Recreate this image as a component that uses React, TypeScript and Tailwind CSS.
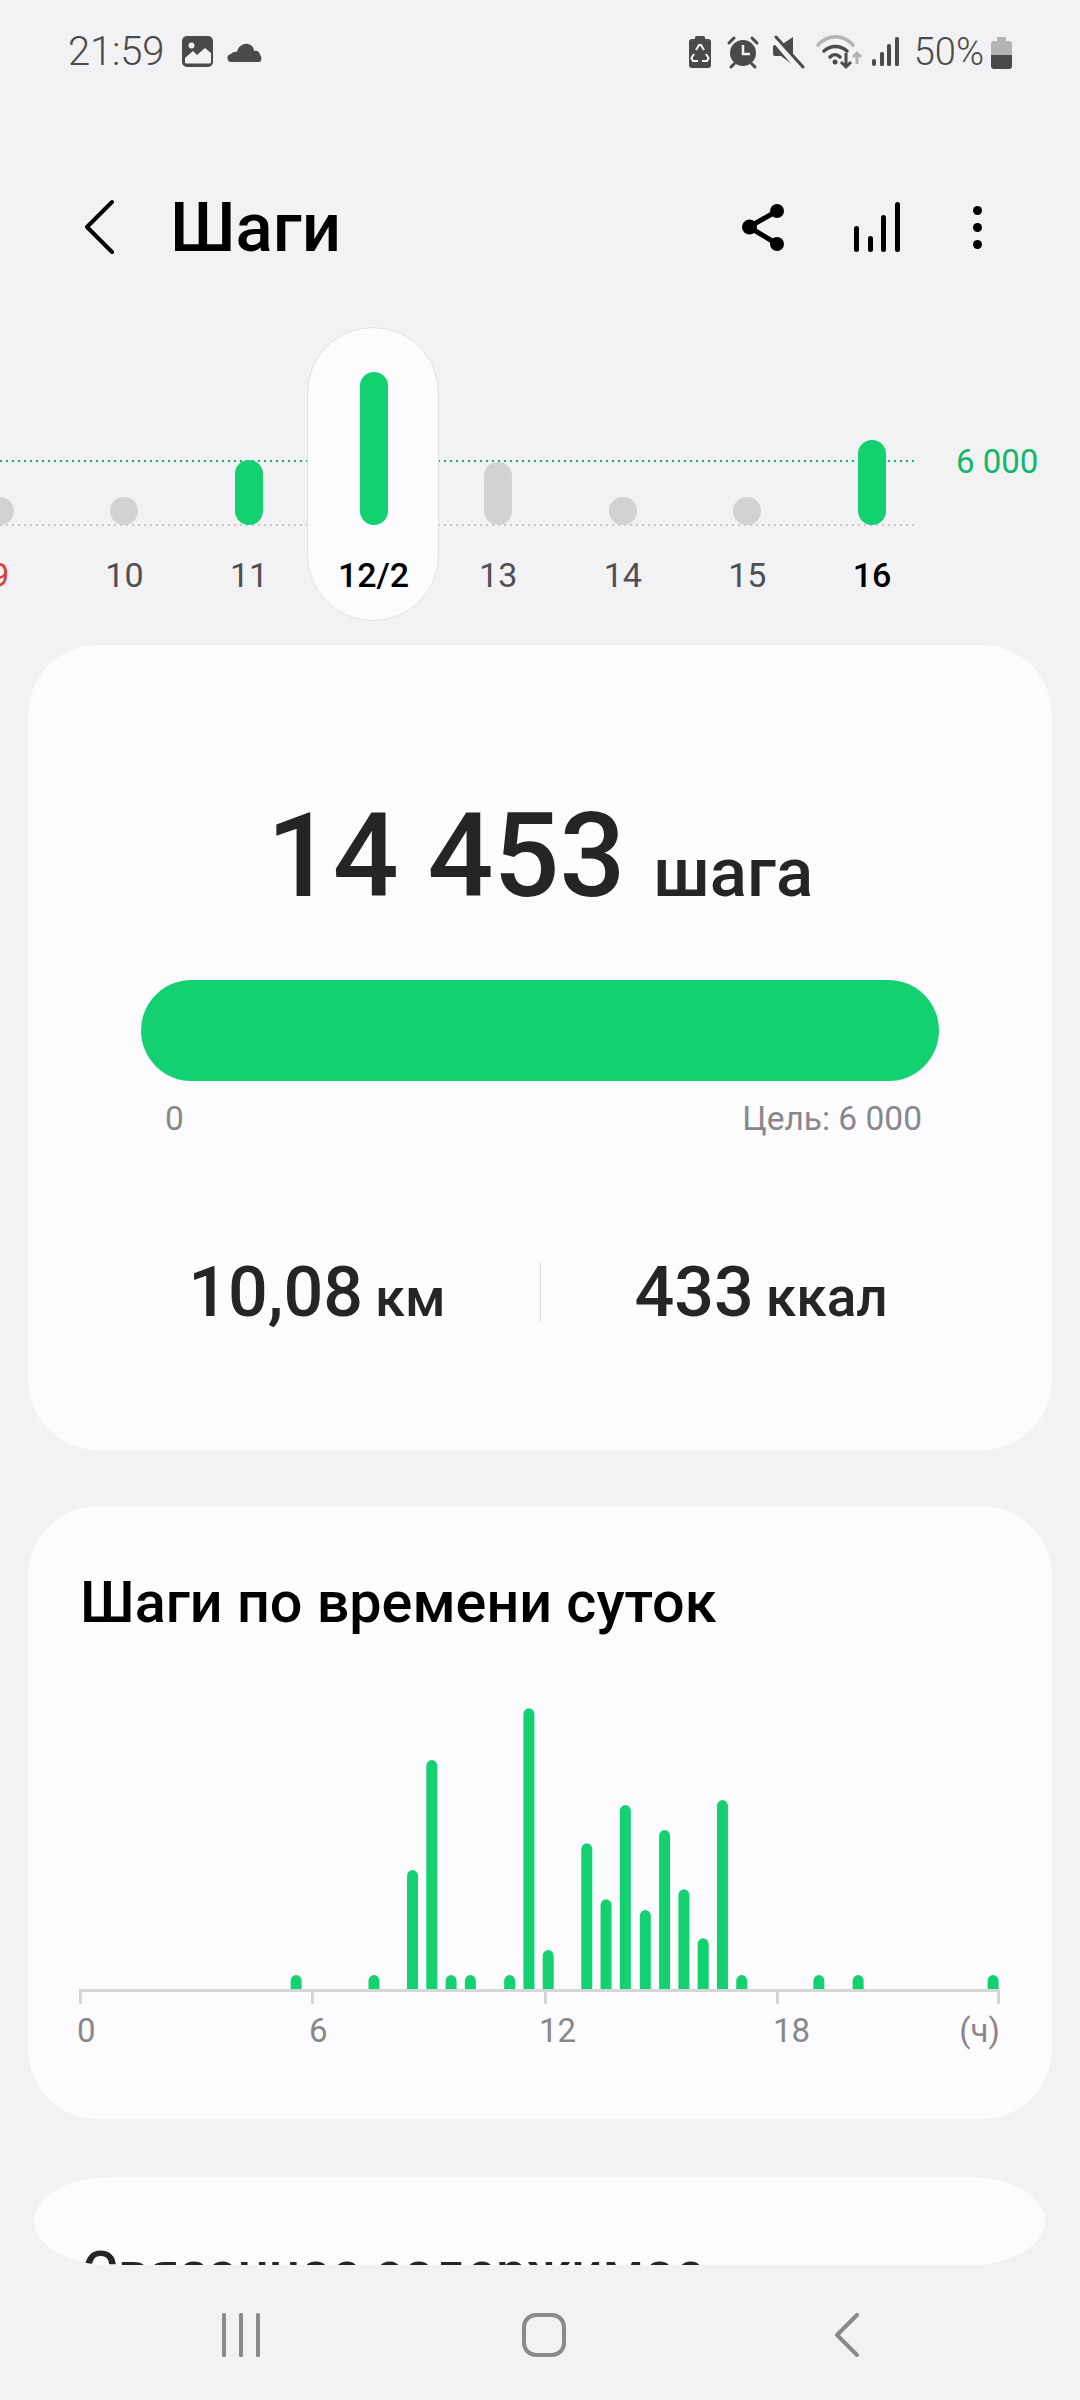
import React from "react";

const days = [
  { label: "9", h: 28, color: "bg-[#d2d2d2]", text: "text-[#d9413a]" },
  { label: "10", h: 28, color: "bg-[#d2d2d2]", text: "text-[#4f5054]" },
  { label: "11", h: 65, color: "bg-[#13d071]", text: "text-[#4f5054]" },
  { label: "12/2", h: 153, color: "bg-[#13d071]", text: "text-black font-medium", selected: true },
  { label: "13", h: 63, color: "bg-[#d2d2d2]", text: "text-[#4f5054]" },
  { label: "14", h: 28, color: "bg-[#d2d2d2]", text: "text-[#4f5054]" },
  { label: "15", h: 28, color: "bg-[#d2d2d2]", text: "text-[#4f5054]" },
  { label: "16", h: 85, color: "bg-[#13d071]", text: "text-black font-medium" },
];

const xs = [430, 543, 599, 627, 655, 683, 740, 768, 796, 852, 880, 908, 937, 965, 993, 1021, 1049, 1077, 1189, 1246, 1442];
const tops = [975, 975, 660, 330, 975, 975, 975, 175, 900, 580, 748, 465, 780, 540, 718, 865, 450, 975, 975, 975, 975];
const ticks = [51, 283, 516, 748, 969];

function StatusIcons() {
  return (
    <svg width="215" height="36" viewBox="0 0 215 36" className="mt-[2px] shrink-0" fill="#4a4a4a">
      {/* battery saver */}
      <path d="M11 4V2.500A1.500 1.500 0 0 1 12.500 1h7A1.500 1.500 0 0 1 21 2.500V4h3a3 3 0 0 1 3 3v23a3 3 0 0 1-3 3H8a3 3 0 0 1-3-3V7a3 3 0 0 1 3-3z" />
      <path d="M12 15l3-5h2l3 5M22 19l2.500 4-1.500 3h-5M14 26H9l-1.500-3 2.500-4" fill="none" stroke="#f2f2f4" strokeWidth="2" />
      {/* alarm */}
      <circle cx="59" cy="18" r="13" />
      <path d="M59 10v9h7" fill="none" stroke="#f2f2f4" strokeWidth="2.500" />
      <path d="M45 8l5-5M73 8l-5-5M50 29l-3 3M68 29l3 3" fill="none" stroke="#4a4a4a" strokeWidth="3" strokeLinecap="round" />
      {/* mute */}
      <path d="M91 10h6l12-8v28l-12-9h-6a2 2 0 0 1-2-2v-7a2 2 0 0 1 2-2z" />
      <path d="M90 3l26 31" stroke="#f2f2f4" strokeWidth="7" fill="none" />
      <path d="M92 2l27 30" stroke="#4a4a4a" strokeWidth="3" fill="none" strokeLinecap="round" />
      {/* wifi */}
      <path d="M134 10c10-11 25-11 35 0" fill="none" stroke="#b4b4b4" strokeWidth="3.500" strokeLinecap="round" />
      <path d="M140 16c7-6 16-6 23 0M146 22c3-3 7-3 10 0" fill="none" stroke="#4a4a4a" strokeWidth="3.500" strokeLinecap="round" />
      <circle cx="151" cy="27" r="2.500" />
      <path d="M162 18v14m-5-5l5 5 5-5" fill="none" stroke="#4a4a4a" strokeWidth="3" />
      <path d="M173 29V18m-4 4l4-4 4 4" fill="none" stroke="#b4b4b4" strokeWidth="3" />
      {/* signal */}
      <rect x="188" y="24" width="4" height="7" rx="2" />
      <rect x="196" y="17" width="4" height="14" rx="1.500" />
      <rect x="203" y="9" width="4" height="22" rx="1.500" />
      <rect x="211" y="2" width="4" height="29" rx="1.500" />
    </svg>
  );
}

export default function App() {
  return (
    <div className="relative h-[2400px] w-[1080px] overflow-hidden bg-[#f2f2f4] font-['Roboto',sans-serif]">
      {/* status bar */}
      <div className="flex h-[104px] items-center pl-[68px] pr-[68px] text-[38px] font-light text-[#4a4a4a]">
        <span className="text-[40px] tracking-[-0.2px]">21:59</span>
        <svg width="32" height="32" viewBox="0 0 32 32" fill="#4a4a4a" className="ml-[18px]">
          <rect width="31" height="31" rx="5" />
          <circle cx="9.500" cy="9.500" r="3" fill="#f2f2f4" />
          <path d="M3 26v-4l8-7 4 4 8-7 6 5v9a1.500 1.500 0 0 1-1.500 1.500h-23A1.500 1.500 0 0 1 3 26z" fill="#f2f2f4" />
        </svg>
        <svg width="36" height="22" viewBox="0 0 36 22" fill="#4a4a4a" className="ml-[13px]">
          <path d="M5 21a4 4 0 0 1-1-8c1-1 3-3 6-2 1-6 7-9 11-8 4 1 6 4 6 7 3-1 6 1 6 4 2 1 2 7-1 7z" />
        </svg>
        <div className="ml-auto flex items-center">
          <StatusIcons />
          <span className="ml-[15px] leading-none">50%</span>
          <svg width="21" height="32" viewBox="0 0 21 32" className="ml-[7px] mt-[2px]">
            <path d="M7 0h7a1 1 0 0 1 1 1v3h3a3 3 0 0 1 3 3v11H0V7a3 3 0 0 1 3-3h3V1a1 1 0 0 1 1-1z" fill="#b4b4b4" />
            <path d="M0 18h21v11a3 3 0 0 1-3 3H3a3 3 0 0 1-3-3z" fill="#4a4a4a" />
          </svg>
        </div>
      </div>

      {/* app bar */}
      <div className="mt-[63px] flex h-[120px] items-center pl-[84px] pr-[98px]">
        <svg width="30" height="56" viewBox="0 0 30 56" fill="none" stroke="#000" strokeWidth="4" strokeLinecap="round" strokeLinejoin="round">
          <path d="M28 3L3 28l25 25" />
        </svg>
        <span className="ml-[56px] text-[69px] font-medium leading-none text-black">Шаги</span>
        <div className="ml-auto flex items-center">
          <svg width="44" height="48" viewBox="0 0 44 48" className="mr-[68px]">
            <path d="M35 8L7 24l28 17" fill="none" stroke="#000" strokeWidth="5" />
            <circle cx="35" cy="8" r="7" />
            <circle cx="7.500" cy="24" r="7.500" />
            <circle cx="35" cy="41" r="7" />
          </svg>
          <svg width="46" height="52" viewBox="0 0 46 52" className="mr-[73px]">
            <rect x="0" y="25" width="5" height="26" rx="2.500" />
            <rect x="14" y="35" width="5" height="16" rx="2.500" />
            <rect x="27" y="14" width="5" height="37" rx="2.500" />
            <rect x="41" y="1" width="5" height="50" rx="2.500" />
          </svg>
          <div className="flex flex-col gap-[8px]">
            <div className="h-[9px] w-[9px] rounded-full bg-black" />
            <div className="h-[9px] w-[9px] rounded-full bg-black" />
            <div className="h-[9px] w-[9px] rounded-full bg-black" />
          </div>
        </div>
      </div>

      {/* timeline */}
      <div className="relative mt-[40px] h-[294px]">
        <svg width="916" height="70" viewBox="0 0 916 70" className="absolute left-0 top-[130px]">
          <line x1="0" y1="4" x2="916" y2="4" stroke="#12b76a" strokeWidth="2" strokeDasharray="2 4" />
          <line x1="0" y1="68" x2="916" y2="68" stroke="#c8c8c8" strokeWidth="2" strokeDasharray="2 4" />
        </svg>
        <div className="relative -ml-[62.5px] flex">
          {days.map((d) => (
            <div key={d.label} className="relative flex h-[294px] w-[124.6px] shrink-0 flex-col items-center">
              {d.selected && (
                <div className="absolute -left-[4px] top-0 h-[294px] w-[132px] rounded-full border border-[#e2e2e4] bg-[#fcfcfe]" />
              )}
              <div className="relative flex h-[198px] items-end">
                <div className={`w-[28px] rounded-full ${d.color}`} style={{ height: d.h }} />
              </div>
              <div className={`relative mt-[30px] text-[34px] leading-[40px] ${d.text}`}>{d.label}</div>
            </div>
          ))}
        </div>
        <div className="absolute left-[956px] top-[115px] text-[33px] leading-[40px] text-[#12b76a]">6 000</div>
      </div>

      {/* card 1 */}
      <div className="mx-[28px] mt-[24px] h-[805px] rounded-[70px] bg-[#fcfcfe] text-[#252528]">
        <div className="flex items-baseline justify-center pt-[146px]">
          <span className="text-[116px] font-medium leading-[130px]">14 453</span>
          <span className="ml-[28px] text-[69px] font-medium leading-none">шага</span>
        </div>
        <div className="mx-[113px] mt-[59px] h-[101px] rounded-full bg-[#13d071]" />
        <div className="mx-[113px] mt-[18px] flex justify-between pl-[24px] pr-[17px] text-[33.5px] leading-[40px] text-[#88888c]">
          <span>0</span>
          <span>Цель: 6 000</span>
        </div>
        <div className="mt-[123px] flex h-[60px] items-center">
          <div className="flex flex-1 items-baseline justify-end pr-[91px]">
            <span className="text-[70px] font-medium">10,08</span>
            <span className="ml-[12px] text-[54px] font-medium">км</span>
          </div>
          <div className="h-[60px] w-px translate-x-[3px] bg-[#dcdcdc]" />
          <div className="flex flex-1 items-baseline pl-[97px]">
            <span className="text-[70px] font-medium">433</span>
            <span className="ml-[12px] text-[55px] font-medium">ккал</span>
          </div>
        </div>
      </div>

      {/* card 2 */}
      <div className="mx-[28px] mt-[56px] h-[613px] rounded-[70px] bg-[#fcfcfe]">
        <div className="pl-[52px] pt-[62px] text-[57.5px] font-medium leading-[70px] text-black">Шаги по времени суток</div>
        <svg width="1024" height="320" viewBox="0 0 1024 320" className="mt-[52px] block">
          {xs.map((x, i) => {
            const cx = x / 1.452 - 28;
            const y = tops[i] / 3 - 40;
            return (
              <path
                key={x}
                d={`M${cx - 5.5} 300V${y + 6}a5.5 6 0 0 1 11 0V300z`}
                fill="#13d071"
              />
            );
          })}
          <rect x="51" y="299" width="921" height="3" fill="#d6d6d8" />
          {ticks.map((t) => (
            <rect key={t} x={t} y="299" width="3" height="15" fill="#d6d6d8" />
          ))}
        </svg>
        <div className="ml-[49px] mt-[1px] flex w-[923px] text-[33px] leading-[40px] text-[#88888c]">
          <span className="w-[232px]">0</span>
          <span className="w-[230px]">6</span>
          <span className="w-[234px]">12</span>
          <span className="flex-1">18</span>
          <span>(ч)</span>
        </div>
      </div>

      {/* card 3 */}
      <div className="mx-[34px] mt-[58px] h-[88px] w-[1011px] overflow-hidden rounded-[76px/44px] bg-[#fcfcfe]">
        <div className="pl-[48px] pt-[60px] text-[55px] font-medium leading-[70px] text-[#252528]">Связанное содержимое</div>
      </div>

      {/* nav */}
      <div className="absolute bottom-[43px] left-0 flex h-[44px] w-full items-center">
        <svg width="38" height="44" viewBox="0 0 38 44" className="ml-[222px]" fill="#8a8a8a">
          <rect x="0" width="4" height="44" rx="1.500" />
          <rect x="17" width="4" height="44" rx="1.500" />
          <rect x="34" width="4" height="44" rx="1.500" />
        </svg>
        <div className="ml-[262px] h-[44px] w-[44px] rounded-[14px] border-[4px] border-[#8a8a8a]" />
        <svg width="24" height="44" viewBox="0 0 24 44" className="ml-[269px]" fill="none" stroke="#8a8a8a" strokeWidth="4" strokeLinecap="round" strokeLinejoin="round">
          <path d="M22 2L2 22l20 20" />
        </svg>
      </div>
    </div>
  );
}
